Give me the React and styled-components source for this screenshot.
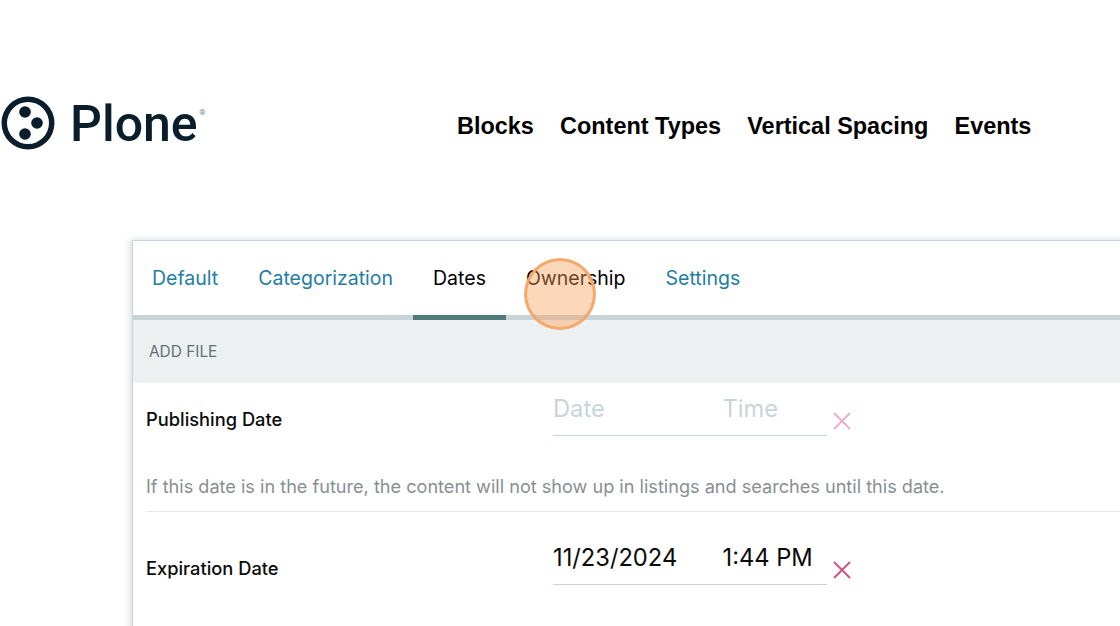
import React from "react"
import styled, { createGlobalStyle } from "styled-components"

const GlobalStyle = createGlobalStyle`
  html, body {
    margin: 0;
    padding: 0;
    height: 100%;
    overflow: hidden;
    background: #ffffff;
    font-family: "Inter", "Liberation Sans", sans-serif;
  }
`

const Page = styled.div`
  position: relative;
  width: 1120px;
  height: 626px;
  overflow: hidden;
`

const Header = styled.header`
  display: flex;
  align-items: center;
  height: 240px;
  padding: 6px 0 0 1px;
  box-sizing: border-box;
`

const Logo = styled.div`
  display: flex;
  align-items: center;
  gap: 15px;
  width: 456px;
  color: #0a1d2a;
`

const LogoWord = styled.span`
  position: relative;
  top: 1px;
  font-family: "Roboto", sans-serif;
  font-size: 50px;
  font-weight: 500;
  line-height: 54px;
`

const Registered = styled.sup`
  position: absolute;
  top: 12px;
  right: -8px;
  font-size: 8px;
  font-weight: 400;
  line-height: 8px;
  color: #6f7c85;
`

const Nav = styled.nav`
  display: flex;
  gap: 26.200px;
  padding-top: 6px;
`

const NavLink = styled.a`
  font-family: "Liberation Sans", sans-serif;
  font-size: 23.450px;
  font-weight: 700;
  color: #000000;
`

const Panel = styled.section`
  width: 1100px;
  height: 420px;
  margin-left: 132px;
  background: #ffffff;
  border: 1px solid #c7d5d8;
  border-right: 0;
  box-shadow: -2px 0 7px rgba(2, 38, 61, 0.16);
`

const Tabs = styled.div`
  display: flex;
  height: 79px;
  box-sizing: border-box;
  border-bottom: 5px solid #c7d5d8;
`

const Tab = styled.div`
  display: flex;
  align-items: center;
  height: 79px;
  box-sizing: border-box;
  padding: 0 20px;
  font-size: 19.500px;
  color: ${p => (p.$active || p.$plain ? "#000000" : "#1f7ea3")};
  border-bottom: 5px solid ${p => (p.$active ? "#507b7b" : "transparent")};

  &:first-child {
    padding-left: 19px;
  }
`

const SectionBar = styled.div`
  display: flex;
  align-items: center;
  height: 63px;
  padding-left: 16px;
  background: #ecf0f1;
  font-size: 15.400px;
  color: #5e7275;
`

const Field = styled.div`
  display: grid;
  grid-template-columns: 407px 274px 30px;
  align-items: end;
  padding: 0 0 0 13px;
  height: ${p => p.$height}px;
  box-sizing: border-box;
`

const Label = styled.label`
  align-self: center;
  font-size: 18.300px;
  font-weight: 500;
  color: #0a0a0a;
  padding-top: ${p => p.$offset}px;
`

const Inputs = styled.div`
  display: grid;
  grid-template-columns: 169.500px 1fr;
  height: 53px;
  box-sizing: border-box;
  border-bottom: 1px solid #c7d5d8;
  font-size: 23.700px;
  line-height: 52px;
  color: ${p => (p.$empty ? "#c7d5d8" : "#0a0a0a")};
`

const ClearButton = styled.button`
  display: flex;
  align-items: center;
  justify-content: center;
  width: 30px;
  height: 24px;
  padding: 0;
  border: 0;
  background: none;
  margin-bottom: 3px;
  color: #cb5480;
  opacity: ${p => (p.$disabled ? 0.45 : 1)};
`

const Hint = styled.p`
  margin: 0 0 0 13px;
  padding: 36.500px 0 12.500px;
  font-size: 18.120px;
  line-height: 26px;
  color: #878f93;
  border-bottom: 1px solid #e4eaeb;
`

const ClickMarker = styled.div`
  position: absolute;
  left: 524px;
  top: 258px;
  width: 72px;
  height: 72px;
  box-sizing: border-box;
  border-radius: 50%;
  background: rgba(250, 160, 90, 0.42);
  border: 3px solid rgba(243, 165, 100, 0.95);
`

const CloseIcon = () => (
  <svg width="20" height="20" viewBox="0 0 20 20" fill="none" stroke="currentColor" strokeWidth="1.900">
    <path d="M2 2 18 18M18 2 2 18" />
  </svg>
)

const PloneMark = () => (
  <svg width="54" height="54" viewBox="0 0 54 54" fill="#0a1d2a">
    <path
      fillRule="evenodd"
      d="M27 0.500a26.500 26.500 0 1 0 0 53a26.500 26.500 0 1 0 0-53zM27 6a21 21 0 1 1 0 42a21 21 0 1 1 0-42z"
    />
    <circle cx="24" cy="16" r="5.800" />
    <circle cx="36" cy="27" r="5.800" />
    <circle cx="24" cy="38" r="5.800" />
  </svg>
)

const navItems = ["Blocks", "Content Types", "Vertical Spacing", "Events"]
const tabs = ["Default", "Categorization", "Dates", "Ownership", "Settings"]

export default function App() {
  return (
    <Page>
      <GlobalStyle />
      <Header>
        <Logo>
          <PloneMark />
          <LogoWord>
            Plone
            <Registered>®</Registered>
          </LogoWord>
        </Logo>
        <Nav>
          {navItems.map(item => (
            <NavLink key={item}>{item}</NavLink>
          ))}
        </Nav>
      </Header>
      <Panel>
        <Tabs>
          {tabs.map(tab => (
            <Tab key={tab} $active={tab === "Dates"} $plain={tab === "Ownership"}>
              {tab}
            </Tab>
          ))}
        </Tabs>
        <SectionBar>ADD FILE</SectionBar>
        <Field $height={53}>
          <Label $offset={18}>Publishing Date</Label>
          <Inputs $empty>
            <span>Date</span>
            <span>Time</span>
          </Inputs>
          <ClearButton $disabled>
            <CloseIcon />
          </ClearButton>
        </Field>
        <Hint>If this date is in the future, the content will not show up in listings and searches until this date.</Hint>
        <Field $height={73}>
          <Label $offset={38}>Expiration Date</Label>
          <Inputs>
            <span>11/23/2024</span>
            <span>1:44 PM</span>
          </Inputs>
          <ClearButton>
            <CloseIcon />
          </ClearButton>
        </Field>
      </Panel>
      <ClickMarker />
    </Page>
  )
}
